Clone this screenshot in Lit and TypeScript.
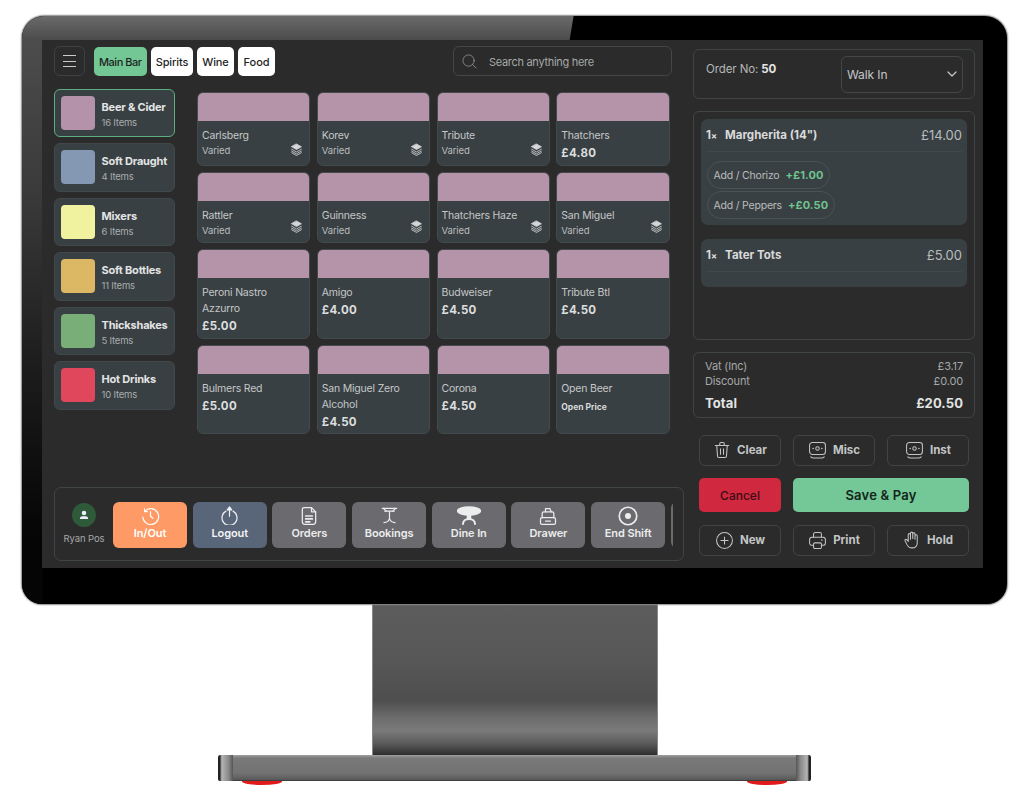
import { LitElement, html, css, svg } from "lit";
import { customElement } from "lit/decorators.js";

const ic = (w: number, body: any, sw = 1.5) => html`<svg width=${w} height=${w} viewBox="0 0 24 24" fill="none" stroke="currentColor" stroke-width=${sw} stroke-linecap="round" stroke-linejoin="round">${body}</svg>`;

const layers = svg`<path d="M12 2 21 7 12 12 3 7Z" fill="currentColor"/><path d="M3 11.5 12 16.5 21 11.5"/><path d="M3 15 12 20 21 15"/><path d="M3 18 12 23 21 18"/>`;
const search = svg`<circle cx="10.500" cy="10.500" r="9"/><path d="m17 17 5.500 5.500"/>`;
const chevron = svg`<path d="m4 8 8 8 8-8"/>`;
const clockBack = svg`<path d="M5 6.500A10 10 0 1 1 2.300 14"/><path d="M4.500 3.500v3.500H8"/><path d="M12 7v6l3 2.500"/>`;
const power = svg`<path d="M7.500 6.500a9.500 9.500 0 1 0 9 0"/><path d="M12 13V3"/><path d="M12 1.200 9.200 5h5.600Z" fill="currentColor"/>`;
const doc = svg`<path d="M6 2h9l5 5v12a3 3 0 0 1-3 3H7a3 3 0 0 1-3-3V4a2 2 0 0 1 2-2Z"/><path d="M15 2v5h5"/><path d="M8 12h8M8 15.500h8M8 19h5" stroke-width="2"/>`;
const cocktail = svg`<path d="M3 3h18M6 6.500h12"/><path d="M12 7v9"/><path d="M4 3l4 3.500M20 3l-4 3.500"/><path d="M5 21c4 0 6-2 7-5 1 3 3 5 7 5"/>`;
const table = svg`<ellipse cx="12" cy="7" rx="11.500" ry="4" fill="currentColor"/><path d="M10.500 10h3v5h-3Z" fill="currentColor"/><path d="M6 20c0-3 2.500-5 6-5s6 2 6 5" stroke-width="2"/>`;
const drawer = svg`<path d="M5 14V9a2 2 0 0 1 2-2h10a2 2 0 0 1 2 2v5"/><path d="M9 7V3h5"/><path d="M3 16a2 2 0 0 1 2-2h14a2 2 0 0 1 2 2v4a2 2 0 0 1-2 2H5a2 2 0 0 1-2-2Z"/><path d="M9 18h6"/><path d="M14 3l2 4"/>`;
const target = svg`<circle cx="12" cy="12" r="10.500" stroke-width="2"/><circle cx="12" cy="12" r="3.600" fill="currentColor" stroke="none"/>`;
const trash = svg`<path d="M3 6h18"/><path d="M9 6V3.500A1.500 1.500 0 0 1 10.500 2h3A1.500 1.500 0 0 1 15 3.500V6"/><path d="M5 6l1 14a2 2 0 0 0 2 2h8a2 2 0 0 0 2-2l1-14"/><path d="M10 10.500v7M14 10.500v7"/>`;
const cash = svg`<rect x="2" y="2" width="20" height="15" rx="3.500"/><circle cx="12" cy="9.500" r="2.200"/><path d="M6.500 9.500h.01M17.500 9.500h.01" stroke-width="2"/><path d="M3.500 20c1 1 2 1.500 3.500 1.500h10c1.500 0 2.500-.5 3.500-1.500"/>`;
const plus = svg`<circle cx="12" cy="12" r="10"/><path d="M12 7.500v9M7.500 12h9"/>`;
const printer = svg`<path d="M7 8V4a2 2 0 0 1 2-2h6a2 2 0 0 1 2 2v4"/><path d="M7 18H5a3 3 0 0 1-3-3v-4a3 3 0 0 1 3-3h14a3 3 0 0 1 3 3v4a3 3 0 0 1-3 3h-2"/><rect x="7" y="15" width="10" height="7" rx="1.500"/><path d="M17.500 11.500h.01" stroke-width="2"/>`;
const hand = svg`<path d="M19 11V6.500a1.500 1.500 0 0 0-3 0V11M16 10V4a1.500 1.500 0 0 0-3 0v6M13 10V3a1.500 1.500 0 0 0-3 0v7M10 11V5a1.500 1.500 0 0 0-3 0v9l-2-2.500c-1-1.200-3-.2-2.300 1.300C4.500 17 6 20 8 21.500c1.200.8 2.500 1 4 1 4.500 0 7-3 7-7V11"/>`;
const person = svg`<circle cx="12" cy="8" r="4.500" fill="currentColor" stroke="none"/><path d="M4 20v-1.500c0-2.500 2-4 4.500-4h7c2.500 0 4.500 1.500 4.500 4V20Z" fill="currentColor" stroke="none"/>`;

const categories = [
  ["Beer & Cider", "16 Items", "#b492a9", true],
  ["Soft Draught", "4 Items", "#8598b3", false],
  ["Mixers", "6 Items", "#f0f29f", false],
  ["Soft Bottles", "11 Items", "#dcb864", false],
  ["Thickshakes", "5 Items", "#7aae79", false],
  ["Hot Drinks", "10 Items", "#e0475c", false],
] as const;

const products: [string, string][] = [
  ["Carlsberg", "v"], ["Korev", "v"], ["Tribute", "v"], ["Thatchers", "£4.80"],
  ["Rattler", "v"], ["Guinness", "v"], ["Thatchers Haze", "v"], ["San Miguel", "v"],
  ["Peroni Nastro Azzurro", "£5.00"], ["Amigo", "£4.00"], ["Budweiser", "£4.50"], ["Tribute Btl", "£4.50"],
  ["Bulmers Red", "£5.00"], ["San Miguel Zero Alcohol", "£4.50"], ["Corona", "£4.50"], ["Open Beer", "o"],
];

const dock = [
  ["In/Out", clockBack, "orange", 19], ["Logout", power, "slate", 19], ["Orders", doc, "", 20], ["Bookings", cocktail, "", 19],
  ["Dine In", table, "", 24], ["Drawer", drawer, "", 20], ["End Shift", target, "", 20], ["", null, "", 0],
] as const;

@customElement("app-root")
export class AppRoot extends LitElement {
  static styles = css`
    :host { display: block; width: 1024px; height: 797px; background: #fff; overflow: hidden; font-family: Inter, "Liberation Sans", sans-serif; color: #cfd2d3; }
    .page { display: flex; flex-direction: column; align-items: center; padding: 16px 17px 0 22px; }
    svg { display: block; flex: none; }

    .monitor { position: relative; width: 985px; height: 588px; box-sizing: border-box; padding: 24px 24px 36px 20px; background: #000; border-radius: 22px 22px 20px 20px; box-shadow: 0 0 1.500px 1px #8a8a8a; flex: none; }
    .monitor::before { content: ""; position: absolute; inset: 0; border-radius: inherit; clip-path: polygon(0 0, 56% 0, 55.600% 24px, 2.100% 24px, 2.100% 100%, 0 100%); background: linear-gradient(180deg, #6a6a6a 0, #4c4c4c 4%, #3a3a3a 30%, #1c1c1c 60%, #050505 88%); }
    .screen { position: relative; display: flex; gap: 9px; height: 100%; box-sizing: border-box; background: #2b2b2b; padding: 6px 8px 7px 12px; }

    .left { width: 630px; display: flex; flex-direction: column; }
    .top { display: flex; height: 30px; align-items: center; }
    .menu { width: 31px; height: 30px; box-sizing: border-box; border: 1px solid #3c4143; border-radius: 6px; display: flex; flex-direction: column; justify-content: center; align-items: center; gap: 4.500px; margin-right: 8.500px; }
    .menu span { width: 13px; height: 1px; background: #c8cacb; }
    .tabs { display: flex; gap: 4px; margin-top: 1px; }
    .tab { height: 29px; box-sizing: border-box; display: flex; align-items: center; justify-content: center; background: #fff; color: #1f1f1f; border-radius: 5px; font-size: 11px; font-weight: 500; letter-spacing: -.1px; }
    .tab.on { background: #72c794; letter-spacing: -.5px; }
    .searchbox { margin-left: auto; margin-right: 12px; width: 219px; height: 30px; box-sizing: border-box; border: 1px solid #434748; border-radius: 6px; display: flex; align-items: center; padding-left: 8px; gap: 12px; color: #a5a8a9; font-size: 11px; letter-spacing: -.3px; }
    .searchbox span { position: relative; top: 1px; }

    .body { display: flex; margin-top: 12.500px; }
    .cats { width: 121px; display: flex; flex-direction: column; gap: 6px; }
    .cat { height: 48.500px; box-sizing: border-box; display: flex; align-items: center; gap: 6.500px; padding-left: 6px; background: #394043; border: 1px solid #41484a; border-radius: 6px; }
    .cat.on { border-color: #5cae7e; }
    .swatch { width: 34px; height: 34px; border-radius: 4px; flex: none; }
    .catText { padding-top: 2px; }
    .cat b { display: block; font-size: 11px; font-weight: 700; color: #e2e4e4; letter-spacing: -.2px; white-space: nowrap; margin-bottom: 3px; }
    .cat small { display: block; font-size: 9.500px; color: #a9adae; letter-spacing: -.2px; }

    .grid { margin: 3.500px 0 0 22px; width: 472.500px; display: grid; grid-template-columns: repeat(4, 113.250px); grid-template-rows: 74px 71px 90px 89px; gap: 6px 6.500px; }
    .prod { background: #394043; border: 1px solid #434a4c; border-radius: 6px; overflow: hidden; display: flex; flex-direction: column; position: relative; }
    .band { height: 28px; background: #b593a9; flex: none; }
    .info { padding: 6.500px 4px 0 4px; }
    .name { font-size: 10.500px; line-height: 16px; color: #c4c7c8; letter-spacing: -.2px; }
    .varied { font-size: 9.500px; line-height: 15px; margin-top: -.5px; color: #b9bcbd; letter-spacing: -.1px; }
    .price { font-size: 11.500px; line-height: 17px; font-weight: 700; color: #dcdede; margin-top: 1.500px; letter-spacing: .3px; }
    .open { font-size: 8.500px; line-height: 17px; font-weight: 700; color: #d8dadb; margin-top: 2.500px; }
    .stack { position: absolute; right: 6px; bottom: 9px; color: #d4d6d7; }

    .dockbar { margin-top: auto; height: 74px; box-sizing: border-box; border: 1px solid #3f4445; border-radius: 7px; display: flex; align-items: center; }
    .user { width: 58px; flex: none; display: flex; flex-direction: column; align-items: center; gap: 6px; margin-top: -1px; font-size: 9.500px; color: #a5a8a9; letter-spacing: -.1px; white-space: nowrap; }
    .avatar { width: 24px; height: 24px; border-radius: 50%; background: #2f5a3a; color: #eef; display: flex; align-items: center; justify-content: center; }
    .docks { width: 560px; display: flex; gap: 5.700px; overflow: hidden; margin-top: 1px; }
    .dbtn { width: 74px; height: 46px; flex: none; box-sizing: border-box; background: #6b6a6e; border-radius: 6px; color: #eceded; font-size: 11px; font-weight: 600; letter-spacing: -.1px; display: flex; flex-direction: column; align-items: center; }
    .dicon { height: 20px; margin-top: 4px; display: flex; align-items: center; justify-content: center; }
    .dbtn.orange { background: #fd9a66; color: #fff; }
    .dbtn.slate { background: #596679; color: #f2f3f4; }

    .right { width: 282px; display: flex; flex-direction: column; padding-top: 3px; }
    .panel { border: 1px solid #3f4445; border-radius: 6px; box-sizing: border-box; }
    .order { height: 50px; display: flex; align-items: center; padding: 0 11px 0 12px; font-size: 11.500px; color: #b4b7b8; letter-spacing: -.1px; }
    .order b { color: #e2e4e4; }
    .orderno { margin-bottom: 10px; }
    .select { margin-left: auto; width: 122px; height: 37px; box-sizing: border-box; border: 1px solid #434748; border-radius: 6px; display: flex; align-items: center; justify-content: space-between; padding: 0 4px 0 5px; color: #c4c7c8; font-size: 12px; }
    .items { margin-top: 12px; height: 229px; padding: 7px 7px; display: flex; flex-direction: column; gap: 14px; }
    .line { background: #394043; border-radius: 7px; padding: 0 5px 0 5px; }
    .row1 { height: 32px; border-bottom: 1px solid #41484a; display: flex; align-items: center; font-size: 11.500px; font-weight: 700; color: #d9dbdc; letter-spacing: 0; }
    .row1 i { font-style: normal; margin-right: 8px; font-weight: 700; }
    .row1 i small { font-size: 9px; }
    .row1 span:last-child { margin-left: auto; font-weight: 400; font-size: 13px; color: #b9bcbd; }
    .chips { display: flex; flex-direction: column; align-items: flex-start; gap: 2px; padding: 9px 0 6px 1px; }
    .chip { height: 28px; box-sizing: border-box; border: 1px solid #4b5254; border-radius: 14px; padding: 0 5.500px; display: flex; align-items: center; gap: 6px; font-size: 10.500px; color: #b9bcbd; letter-spacing: -.2px; }
    .chip b { color: #6fc48f; font-size: 11px; letter-spacing: .1px; }
    .line.second { height: 48px; }
    .totals { margin-top: 12px; height: 66px; padding: 6px 11px 0 11px; font-size: 11px; color: #a5a8a9; letter-spacing: -.15px; }
    .totalrow { display: flex; justify-content: space-between; line-height: 15px; }
    .totalrow.big { margin-top: 5px; font-size: 13px; line-height: 18px; font-weight: 700; color: #e2e4e4; letter-spacing: .1px; }
    .actions { margin-top: 16.500px; padding: 0 6px; display: grid; grid-template-columns: repeat(3, 82px); column-gap: 12px; grid-template-rows: 31px 34px 31px; row-gap: 12.500px; }
    .act { border: 1px solid #3f4445; border-radius: 6px; display: flex; align-items: center; justify-content: center; gap: 6px; font-size: 11.500px; font-weight: 700; color: #c2c5c6; }
    .cancel { background: #cf283f; border-radius: 5px; color: #3d0b14; font-size: 12px; font-weight: 500; display: flex; align-items: center; justify-content: center; }
    .save { grid-column: span 2; background: #74c796; border-radius: 5px; color: #12261b; font-size: 13px; font-weight: 600; letter-spacing: .2px; display: flex; align-items: center; justify-content: center; }

    .neck { width: 286px; height: 151px; flex: none; background: linear-gradient(180deg, #5d5d5d 0, #565656 40%, #4e4e4e 64%, #6e6e6e 76%, #7a7a7a 84%, #5c5c5c 92%, #2e2e2e 100%); border-left: 1px solid #888; border-right: 1px solid #888; box-sizing: border-box; }
    .base { width: 593px; height: 26px; flex: none; display: flex; background: linear-gradient(180deg, #a0a0a0 0, #7a7a7a 12%, #727272 70%, #5a5a5a 94%, #333 100%); border-radius: 2px; }
    .cap { width: 15px; background: linear-gradient(90deg, #222 0, #222 12%, #b5b5b5 25%, #8a8a8a 70%, #555 100%); border-radius: 3px 0 0 3px; }
    .cap.end { transform: scaleX(-1); margin-left: auto; }
    .feet { width: 545px; display: flex; justify-content: space-between; flex: none; }
    .foot { width: 40px; height: 3.500px; background: #e01a1a; border-radius: 0 0 50% 50% / 0 0 100% 100%; }
  `;

  render() {
    const tabs: [string, number, boolean][] = [["Main Bar", 53.5, true], ["Spirits", 42, false], ["Wine", 37, false], ["Food", 37, false]];
    return html`
      <div class="page">
        <div class="monitor">
          <div class="screen">
            <div class="left">
              <div class="top">
                <div class="menu"><span></span><span></span><span></span></div>
                <div class="tabs">
                  ${tabs.map(([t, w, on]) => html`<div class="tab ${on ? "on" : ""}" style="width:${w}px">${t}</div>`)}
                </div>
                <div class="searchbox">${ic(15, search, 1.100)}<span>Search anything here</span></div>
              </div>
              <div class="body">
                <div class="cats">
                  ${categories.map(([n, c, col, on]) => html`
                    <div class="cat ${on ? "on" : ""}">
                      <div class="swatch" style="background:${col}"></div>
                      <div class="catText"><b>${n}</b><small>${c}</small></div>
                    </div>`)}
                </div>
                <div class="grid">
                  ${products.map(([n, p]) => html`
                    <div class="prod">
                      <div class="band"></div>
                      <div class="info">
                        <div class="name">${n}</div>
                        ${p === "v" ? html`<div class="varied">Varied</div>`
                          : p === "o" ? html`<div class="open">Open Price</div>`
                          : html`<div class="price">${p}</div>`}
                      </div>
                      ${p === "v" ? html`<div class="stack">${ic(13, layers, 1.500)}</div>` : ""}
                    </div>`)}
                </div>
              </div>
              <div class="dockbar">
                <div class="user"><div class="avatar">${ic(12, person)}</div><span>Ryan Pos</span></div>
                <div class="docks">
                  ${dock.map(([l, i, c, s]) => html`<div class="dbtn ${c}"><div class="dicon">${i ? ic(s, i, 1.500) : ""}</div><span>${l}</span></div>`)}
                </div>
              </div>
            </div>

            <div class="right">
              <div class="panel order">
                <span class="orderno">Order No: <b>50</b></span>
                <div class="select"><span>Walk In</span>${ic(12, chevron, 2.500)}</div>
              </div>
              <div class="panel items">
                <div class="line">
                  <div class="row1"><i>1<small>×</small></i><span>Margherita (14")</span><span>£14.00</span></div>
                  <div class="chips">
                    <div class="chip">Add / Chorizo <b>+£1.00</b></div>
                    <div class="chip">Add / Peppers <b>+£0.50</b></div>
                  </div>
                </div>
                <div class="line second">
                  <div class="row1"><i>1<small>×</small></i><span>Tater Tots</span><span>£5.00</span></div>
                </div>
              </div>
              <div class="panel totals">
                <div class="totalrow"><span>Vat (Inc)</span><span>£3.17</span></div>
                <div class="totalrow"><span>Discount</span><span>£0.00</span></div>
                <div class="totalrow big"><span>Total</span><span>£20.50</span></div>
              </div>
              <div class="actions">
                <div class="act">${ic(18, trash, 1.400)}Clear</div>
                <div class="act">${ic(19, cash, 1.300)}Misc</div>
                <div class="act">${ic(19, cash, 1.300)}Inst</div>
                <div class="cancel">Cancel</div>
                <div class="save">Save &amp; Pay</div>
                <div class="act">${ic(19, plus, 1.300)}New</div>
                <div class="act">${ic(19, printer, 1.300)}Print</div>
                <div class="act">${ic(18, hand, 1.400)}Hold</div>
              </div>
            </div>
          </div>
        </div>
        <div class="neck"></div>
        <div class="base"><div class="cap"></div><div class="cap end"></div></div>
        <div class="feet"><div class="foot"></div><div class="foot"></div></div>
      </div>
    `;
  }
}
